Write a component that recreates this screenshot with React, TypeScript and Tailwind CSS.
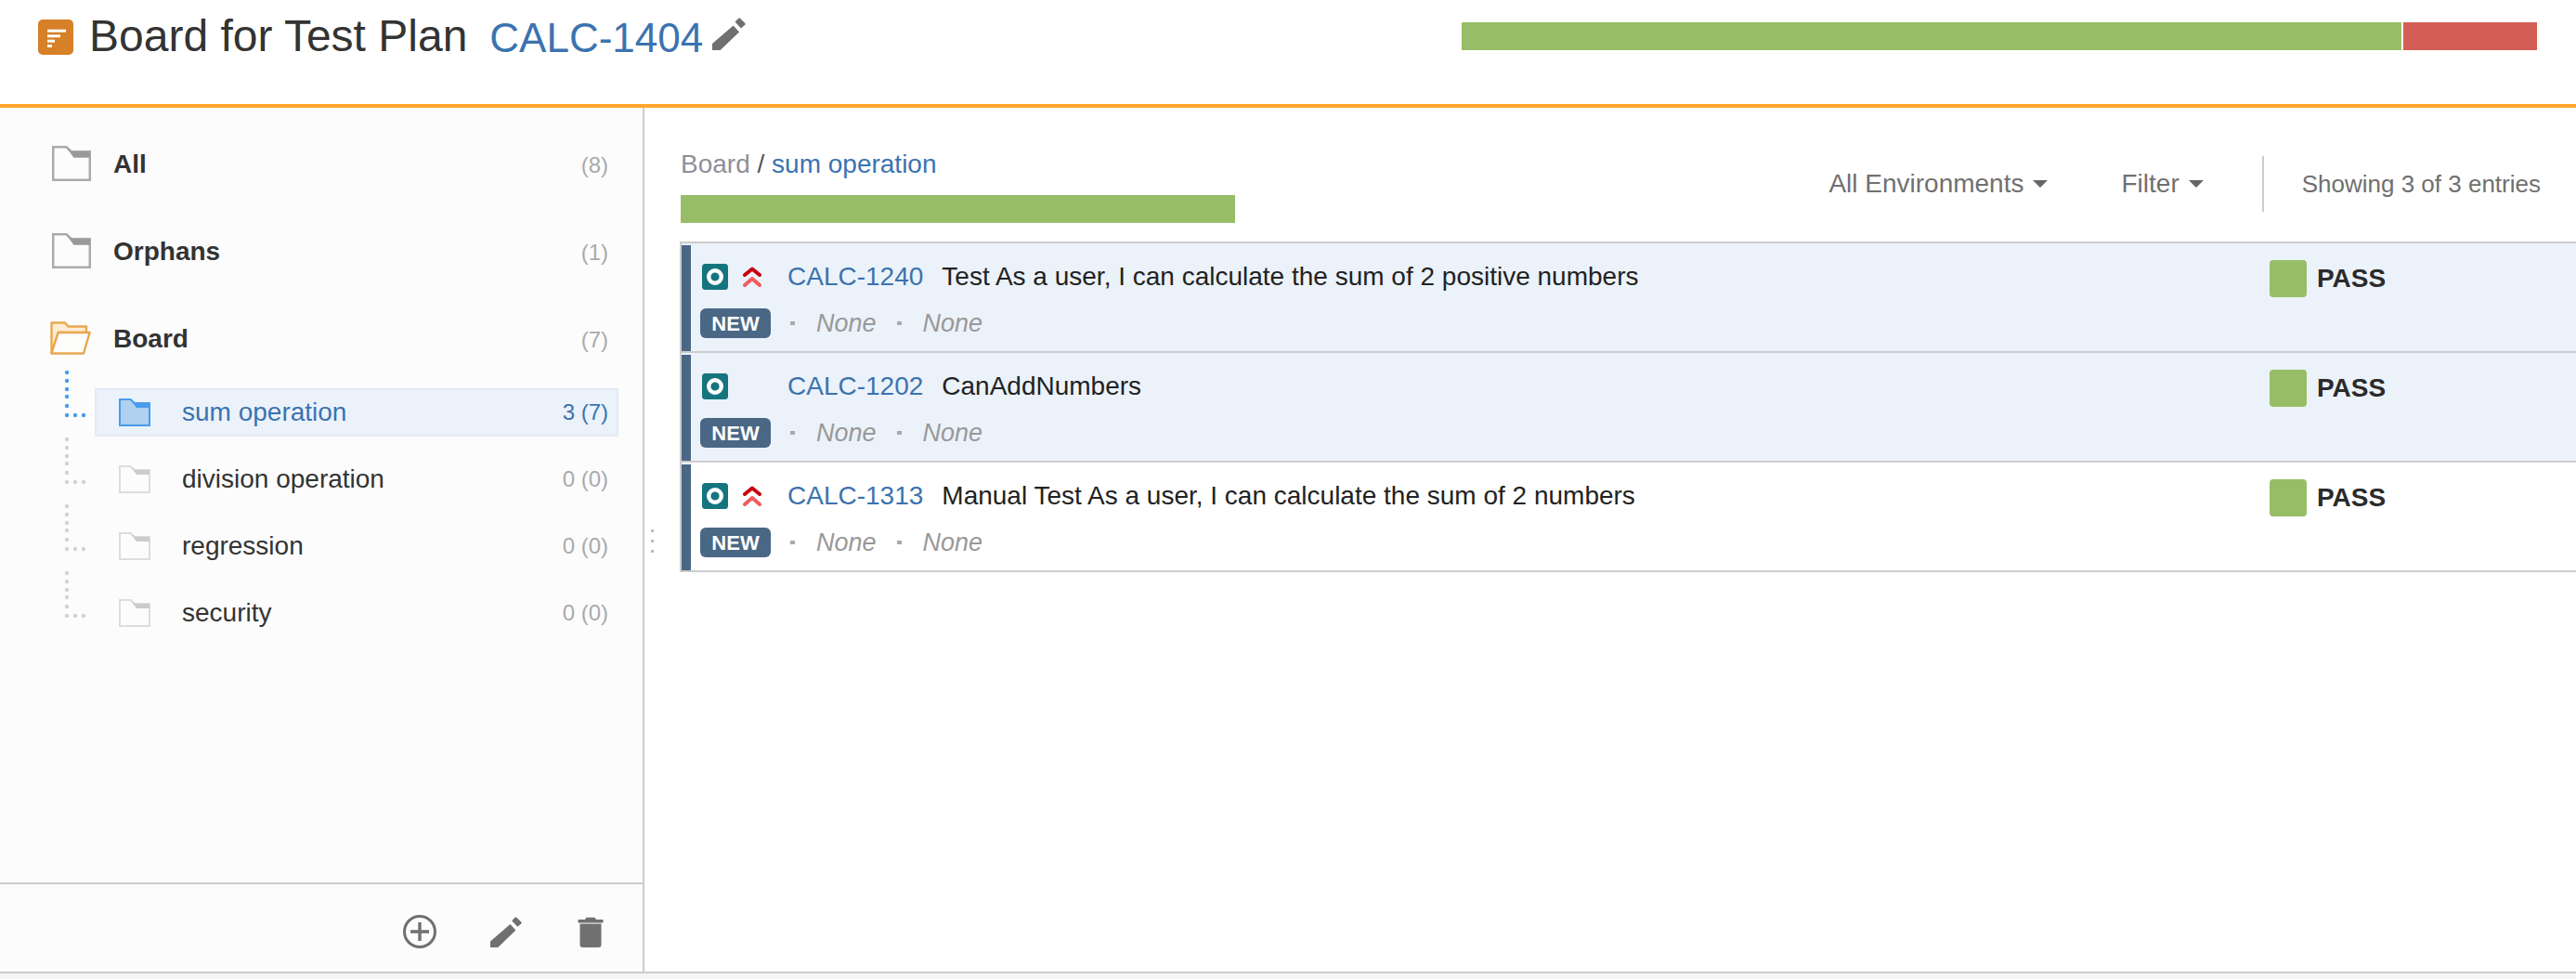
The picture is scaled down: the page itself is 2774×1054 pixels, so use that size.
import React from "react";

const BLUE = "text-[#3b73af]";

function Pencil({ className }: { className: string }) {
  return (
    <svg viewBox="0 0 36 35" className={className} fill="#707070">
      <path d="M0 28 L22.7 8.5 L29 15.5 L8.7 35 L0 35 Z" />
      <path d="M24.5 4.5 L28.5 0.5 Q29.2 0 30 0.7 L35.4 6 Q36 6.8 35.4 7.6 L31 11.5 Z" />
    </svg>
  );
}

function ClosedFolder({ className, stroke, band, fill }: { className: string; stroke: string; band: string; fill: string }) {
  return (
    <svg viewBox="0 0 34 30" preserveAspectRatio="none" className={className}>
      <path d="M1 1 H12.5 L17 5 H33 V29 H1 Z" fill={fill} stroke={stroke} strokeWidth="2" />
      <path d="M12.5 1.5 L17 5 H33 V10 H19 Z" fill={band} />
    </svg>
  );
}

function OpenFolder() {
  return (
    <svg viewBox="0 0 44 36" className="w-[44px] h-[36px] shrink-0 -ml-[2px]">
      <path d="M1.5 34 V1.5 H16 L19.5 5.5 H39 V12 H8.7 L1.5 34 Z" fill="#fdecd2" stroke="#e8a850" strokeWidth="2.4" strokeLinejoin="round" />
      <path d="M1.5 34.5 L8.7 12 H42.6 L36 34.5 Z" fill="#fdfdfc" stroke="#e8a850" strokeWidth="2.4" strokeLinejoin="round" />
    </svg>
  );
}

function Connector({ color }: { color: string }) {
  const ys = [-7, 2, 11, 19, 29];
  return (
    <svg viewBox="0 0 34 72" className="w-[34px] h-[72px] shrink-0 overflow-visible">
      {ys.map((y) => (
        <circle key={y} cx="4" cy={y} r="2.2" fill={color} />
      ))}
      {[4, 13, 22].map((x) => (
        <circle key={x} cx={x} cy="39" r="2.2" fill={color} />
      ))}
    </svg>
  );
}

function TopRow({ name, count, icon }: { name: string; count: string; icon: React.ReactNode }) {
  return (
    <div className="h-[94px] flex items-center pl-[56px] pr-[37px]">
      {icon}
      <span className="ml-[24px] pt-[2px] text-[28px] font-bold text-[#333333]">{name}</span>
      <span className="ml-auto pt-[4px] text-[24px] text-[#aaaaaa]">{count}</span>
    </div>
  );
}

function ChildRow({ name, count, selected }: { name: string; count: string; selected?: boolean }) {
  return (
    <div className="h-[72px] flex items-center pl-[68px]">
      <Connector color={selected ? "#4a9bec" : "#d2d2d2"} />
      <div
        className={`w-[564px] h-[52px] border-2 flex items-center pl-[24px] pr-[9px] ${
          selected ? "bg-[#ebf2fa] border-[#e2ebf7]" : "border-transparent"
        }`}
      >
        {selected ? (
          <ClosedFolder className="w-[34px] h-[30px] shrink-0" stroke="#4a9bec" band="#4a9bec" fill="#afd0ee" />
        ) : (
          <ClosedFolder className="w-[34px] h-[30px] shrink-0" stroke="#dddddd" band="#cccccc" fill="#fcfcfc" />
        )}
        <span className={`ml-[34px] text-[28px] ${selected ? BLUE : "text-[#333333]"}`}>{name}</span>
        <span className={`ml-auto text-[24px] ${selected ? BLUE : "text-[#aaaaaa]"}`}>{count}</span>
      </div>
    </div>
  );
}

function TestIcon() {
  return (
    <svg viewBox="0 0 28 28" className="w-[28px] h-[28px] shrink-0">
      <rect width="28" height="28" rx="3.5" fill="#15757f" />
      <circle cx="14" cy="14" r="6.8" fill="none" stroke="#ffffff" strokeWidth="4.4" />
    </svg>
  );
}

function Priority() {
  return (
    <svg viewBox="0 0 20 22" className="w-[20px] h-[22px]" fill="none" strokeWidth="4" strokeLinecap="round" strokeLinejoin="round">
      <path d="M2 9 L10 2.5 L18 9" stroke="#c9000e" />
      <path d="M2 20 L10 13 L18 20" stroke="#f15c5c" />
    </svg>
  );
}

function Row({ id, title, selected, high }: { id: string; title: string; selected: boolean; high: boolean }) {
  return (
    <div className={`h-[118px] border-b-2 border-[#cccccc] pt-[2px] flex ${selected ? "bg-[#ebf2fa]" : "bg-white"}`}>
      <div className="w-[10px] h-[114px] bg-[#4a6785] shrink-0" />
      <div className="flex-1 pl-[10px] pt-[20px]">
        <div className="h-[28px] ml-[2px] flex items-center">
          <TestIcon />
          <div className="w-[20px] ml-[16px] h-[22px]">{high && <Priority />}</div>
          <span className={`ml-[28px] text-[28px] ${BLUE}`}>{id}</span>
          <span className="ml-[20px] text-[28px] text-[#222222]">{title}</span>
        </div>
        <div className="mt-[20px] h-[32px] flex items-center">
          <span className="w-[76px] h-[32px] rounded-[6px] bg-[#4a6785] text-white text-[22px] font-bold flex items-center justify-center">
            NEW
          </span>
          <span className="ml-[21px] w-[5px] h-[4px] bg-[#aaaaaa]" />
          <span className="ml-[23px] text-[27px] leading-[32px] italic text-[#999999]">None</span>
          <span className="ml-[22px] w-[5px] h-[4px] bg-[#aaaaaa]" />
          <span className="ml-[23px] text-[27px] leading-[32px] italic text-[#999999]">None</span>
        </div>
      </div>
      <div className="w-[330px] shrink-0 pt-[16px] flex items-start">
        <span className="w-[40px] h-[40px] rounded-[4px] bg-[#97be66]" />
        <span className="ml-[11px] h-[40px] leading-[40px] text-[28px] font-bold text-[#2b2b2b]">PASS</span>
      </div>
    </div>
  );
}

function Caret() {
  return <span className="ml-[10px] w-0 h-0 border-x-[8px] border-x-transparent border-t-[8px] border-t-[#666666]" />;
}

export default function App() {
  return (
    <div className="w-[2774px] h-[1054px] flex flex-col bg-white font-['Liberation_Sans',Arial,sans-serif] overflow-hidden">
      <header className="h-[116px] shrink-0 border-b-4 border-[#ffa62b] flex items-start pl-[41px] pr-[42px]">
        <svg viewBox="0 0 38 38" className="w-[38px] h-[38px] mt-[21px] shrink-0">
          <rect width="38" height="38" rx="5" fill="#d68027" />
          <rect x="10" y="10.7" width="20" height="3" fill="#ffffff" />
          <rect x="10" y="16.3" width="14" height="3" fill="#ffffff" />
          <rect x="10" y="21.7" width="8" height="3" fill="#ffffff" />
          <rect x="10" y="27" width="5" height="3" fill="#ffffff" />
        </svg>
        <h1 className="ml-[17px] mt-[12px] text-[48px] leading-[54px] text-[#333333]">Board for Test Plan</h1>
        <span className={`ml-[24px] mt-[14px] text-[44px] leading-[54px] ${BLUE}`}>CALC-1404</span>
        <Pencil className="w-[36px] h-[35px] ml-[10px] mt-[19px] shrink-0" />
        <div className="ml-auto mt-[24px] flex gap-[2px]">
          <div className="w-[1012px] h-[30px] bg-[#97be66]" />
          <div className="w-[144px] h-[30px] bg-[#d35e55]" />
        </div>
      </header>

      <div className="flex-1 flex min-h-0">
        <aside className="w-[694px] shrink-0 border-r-2 border-[#cccccc] bg-[#fcfcfc] flex flex-col">
          <div className="flex-1 pt-[13px]">
            <TopRow
              name="All"
              count="(8)"
              icon={<ClosedFolder className="w-[42px] h-[38px] shrink-0" stroke="#aaaaaa" band="#999999" fill="#fcfcfc" />}
            />
            <TopRow
              name="Orphans"
              count="(1)"
              icon={<ClosedFolder className="w-[42px] h-[38px] shrink-0" stroke="#aaaaaa" band="#999999" fill="#fcfcfc" />}
            />
            <TopRow name="Board" count="(7)" icon={<OpenFolder />} />
            <div className="-mt-[3px]">
              <ChildRow name="sum operation" count="3 (7)" selected />
              <ChildRow name="division operation" count="0 (0)" />
              <ChildRow name="regression" count="0 (0)" />
              <ChildRow name="security" count="0 (0)" />
            </div>
          </div>
          <div className="h-[96px] shrink-0 border-t-2 border-[#cccccc] flex items-start justify-end pr-[42px] pt-[33px]">
            <svg viewBox="0 0 36 36" className="w-[36px] h-[36px] shrink-0" fill="none" stroke="#707070">
              <circle cx="18" cy="18" r="16.5" strokeWidth="3" />
              <path d="M18 8 V28 M8 18 H28" strokeWidth="3.4" />
            </svg>
            <Pencil className="w-[34px] h-[33px] ml-[58px] mt-[2px] shrink-0" />
            <svg viewBox="0 0 28 33" className="w-[28px] h-[33px] ml-[60px] mt-[2px] shrink-0" fill="#707070">
              <path d="M0.5 3 H8 L9.5 0.8 H18.5 L20 3 H27.5 V6.5 H0.5 Z" />
              <path d="M2.5 7.5 H25.5 V30 Q25.5 33 22.5 33 H5.5 Q2.5 33 2.5 30 Z" />
            </svg>
          </div>
        </aside>

        <main className="relative flex-1 min-w-0 pl-[38px]">
          <div className="absolute left-[7px] top-[454px] flex flex-col gap-[8px]">
            <span className="w-[3px] h-[3px] bg-[#bbbbbb]" />
            <span className="w-[3px] h-[3px] bg-[#bbbbbb]" />
            <span className="w-[3px] h-[3px] bg-[#bbbbbb]" />
          </div>
          <div className="h-[144px] flex items-start justify-between pr-[38px]">
            <div className="pl-[1px] pt-[45px]">
              <div className="text-[28px] leading-[32px]">
                <span className="text-[#8f8f98]">Board</span>
                <span className="text-[#555555]"> / </span>
                <span className={BLUE}>sum operation</span>
              </div>
              <div className="mt-[17px] w-[597px] h-[30px] bg-[#97be66]" />
            </div>
            <div className="mt-[52px] h-[60px] flex items-center text-[#707070]">
              <span className="text-[28px]">All Environments</span>
              <Caret />
              <span className="ml-[79px] text-[28px]">Filter</span>
              <Caret />
              <span className="ml-[63px] h-[60px] w-[2px] bg-[#cccccc]" />
              <span className="ml-[41px] text-[26px]">Showing 3 of 3 entries</span>
            </div>
          </div>
          <div className="border-t-2 border-l-2 border-[#cccccc]">
            <Row id="CALC-1240" title="Test As a user, I can calculate the sum of 2 positive numbers" selected high />
            <Row id="CALC-1202" title="CanAddNumbers" selected high={false} />
            <Row id="CALC-1313" title="Manual Test As a user, I can calculate the sum of 2 numbers" selected={false} high />
          </div>
        </main>
      </div>

      <footer className="h-[8px] shrink-0 border-t-2 border-[#cccccc] bg-[#f5f5f5]" />
    </div>
  );
}
